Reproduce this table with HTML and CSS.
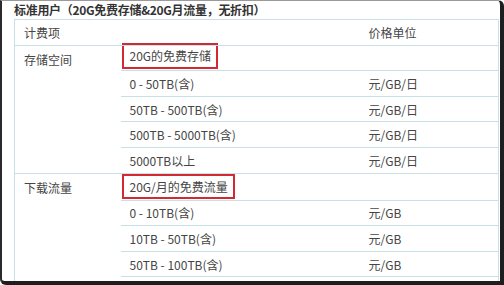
FILE: index.html
```html
<!DOCTYPE html>
<html>
<head>
<meta charset="utf-8">
<link rel="stylesheet" href="styles.css">
</head>
<body>
<div class="frame">
  <div class="title">标准用户（20G免费存储&amp;20G月流量，无折扣）</div>
  <table class="price">
    <colgroup><col class="c1"><col class="c2"><col class="c3"></colgroup>
    <tr class="head"><td>计费项</td><td></td><td>价格单位</td></tr>
    <tr class="group"><td rowspan="5" class="item">存储空间</td><td class="boxcell"><span class="mark">20G的免费存储</span></td><td></td></tr>
    <tr><td>0 - 50TB(含)</td><td>元/GB/日</td></tr>
    <tr><td>50TB - 500TB(含)</td><td>元/GB/日</td></tr>
    <tr><td>500TB - 5000TB(含)</td><td>元/GB/日</td></tr>
    <tr><td>5000TB以上</td><td>元/GB/日</td></tr>
    <tr class="group"><td rowspan="5" class="item">下载流量</td><td class="boxcell"><span class="mark mark2">20G/月的免费流量</span></td><td></td></tr>
    <tr><td>0 - 10TB(含)</td><td>元/GB</td></tr>
    <tr><td>10TB - 50TB(含)</td><td>元/GB</td></tr>
    <tr><td>50TB - 100TB(含)</td><td>元/GB</td></tr>
    <tr class="tail"><td></td><td></td></tr>
  </table>
</div>
</body>
</html>
```
FILE: styles.css
```css
html, body { margin: 0; padding: 0; background: #fff; }
.frame {
  box-sizing: border-box;
  width: 504px;
  height: 285px;
  overflow: hidden;
  background: #fff;
  border-left: 2px solid #2a2a2a;
  border-top: 1px solid #9a9a9a;
  border-right: 4px solid #1e1e1e;
  border-bottom: 4px solid #1e1e1e;
  border-top-right-radius: 6px;
  border-bottom-left-radius: 6px;
  font-family: "Noto Sans CJK SC", "Noto Sans", sans-serif;
  color: #454545;
}
.title {
  height: 18px;
  line-height: 18px;
  padding-left: 12px;
  font-size: 12px;
  letter-spacing: -0.3px;
  font-weight: bold;
  color: #333;
  white-space: nowrap;
}
.price {
  margin-left: 12px;
  width: 484px;
  border-collapse: collapse;
  table-layout: fixed;
  font-size: 12px;
  border-left: 1px solid #c6e0e6;
  border-right: 1px solid #c6e0e6;
}
.c1 { width: 106px; }
.c2 { width: 239px; }
.c3 { width: 139px; }
.price tr { height: 25.6px; }
.price td {
  border-top: 1px solid #c6e0e6;
  padding: 0 0 0 9px;
  vertical-align: middle;
  white-space: nowrap;
}
.price td.item { vertical-align: top; padding-left: 9px; padding-top: 5px; }
.price td.boxcell { padding-left: 1px; }
.mark {
  display: block;
  width: fit-content;
  box-sizing: border-box;
  height: 26px;
  line-height: 22px;
  margin-top: -3px;
  margin-bottom: 1px;
  padding: 0 5px 0 6px;
  border: 2px solid #d22a32;
}
.mark2 { height: 25px; line-height: 21px; margin-top: 0; margin-bottom: 1px; }
```
